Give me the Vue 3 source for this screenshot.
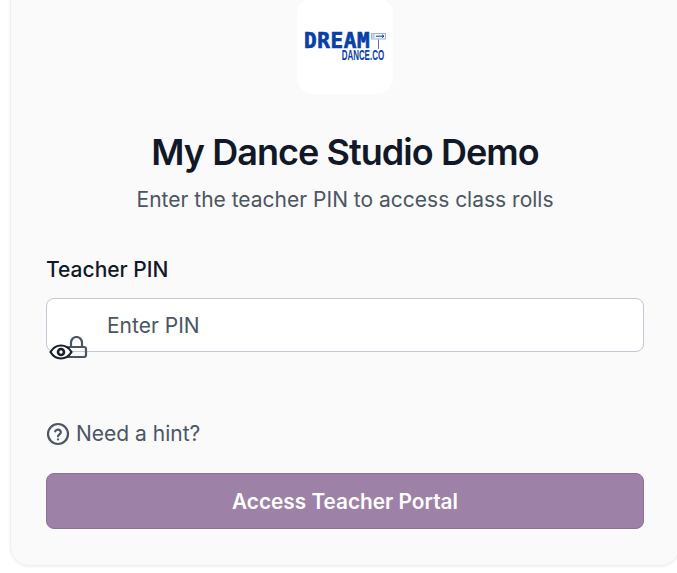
<template>
  <main class="page">
    <section class="card">
      <div class="logo">
        <div class="logoMark">
          <div class="logoTop">
            <span class="dream">DREAM</span>
            <svg class="sign" width="15" height="16" viewBox="0 0 15 16">
              <rect x="0.5" y="0.5" width="14" height="5.5" fill="#f2f5fb" stroke="#9db2de" stroke-width="1" />
              <path d="M1.5 2h2M1.5 4h2" stroke="#7f98cf" stroke-width="1" />
              <path d="M5 3.2h8M11 1.8l2 1.4-2 1.4" fill="none" stroke="#0b3fa8" stroke-width="1" />
              <path d="M7.5 6.5V16" stroke="#4f76c4" stroke-width="1" />
            </svg>
          </div>
          <span class="dance">DANCE.CO</span>
        </div>
      </div>

      <h1>My Dance Studio Demo</h1>
      <p class="subtitle">Enter the teacher PIN to access class rolls</p>

      <label class="fieldLabel" for="pin">Teacher PIN</label>
      <div class="inputWrap">
        <input id="pin" type="password" placeholder="Enter PIN" />
        <svg class="lockIcon" width="22" height="22" viewBox="0 0 22 22" fill="none" stroke="#4b5563" stroke-width="2.2">
          <path d="M5 11V6.5a5.5 5.5 0 0 1 11 0V11" />
          <rect x="1" y="11" width="19" height="10" rx="2" />
        </svg>
        <svg class="eyeIcon" width="24" height="16" viewBox="0 0 24 16" fill="#ffffff" stroke="#1a1f2b" stroke-width="2.2">
          <path d="M1.5 8C4 3.8 7.6 1.5 12 1.5S20 3.8 22.5 8C20 12.2 16.4 14.5 12 14.5S4 12.2 1.5 8Z" />
          <circle cx="12" cy="8" r="3" stroke-width="2.6" />
        </svg>
      </div>

      <div class="hint">
        <svg width="24" height="24" viewBox="0 0 24 24" fill="none" stroke="#4b5563" stroke-width="2.2" stroke-linecap="round">
          <circle cx="12" cy="12" r="10" />
          <path d="M9.2 9.4a2.9 2.9 0 0 1 5.6 1c0 1.9-2.8 2.4-2.8 3.9" />
          <path d="M12 17.4h.01" />
        </svg>
        <span>Need a hint?</span>
      </div>

      <button class="submit" type="button">Access Teacher Portal</button>
    </section>
  </main>
</template>

<script setup>
</script>

<style>
  html, body {
    background: #ffffff;
    overflow: hidden;
  }
</style>

<style scoped>
  .page {
    width: 677px;
    height: 573px;
    overflow: hidden;
    font-family: Inter, "Liberation Sans", sans-serif;
  }

  .card {
    box-sizing: border-box;
    width: 670px;
    height: 601px;
    margin-left: 10px;
    margin-top: -35px;
    padding: 32px 35px 36px;
    background: #fafafa;
    border: 1px solid #f0f0f2;
    border-radius: 20px;
    box-shadow: 0 1px 3px rgba(0, 0, 0, 0.06);
    display: flex;
    flex-direction: column;
  }

  .logo {
    align-self: center;
    width: 96px;
    height: 96px;
    border-radius: 16px;
    background: #ffffff;
    display: flex;
    justify-content: center;
    align-items: center;
  }

  .logoMark {
    width: 82px;
    display: flex;
    flex-direction: column;
    align-items: flex-end;
    color: #0b3fa8;
    line-height: 1;
  }

  .logoTop {
    display: flex;
    align-items: flex-start;
    justify-content: space-between;
    width: 100%;
    height: 16px;
  }

  .dream {
    font-family: "DejaVu Sans Mono", monospace;
    font-weight: 700;
    font-size: 21px;
    line-height: 16px;
    letter-spacing: 0.6px;
    -webkit-text-stroke: 0.7px #0b3fa8;
  }

  .dance {
    display: block;
    width: 78px;
    margin-left: -30px;
    margin-right: 3px;
    text-align: right;
    font-family: "Liberation Sans", sans-serif;
    font-weight: 700;
    font-size: 15px;
    line-height: 11px;
    white-space: nowrap;
    transform: scaleX(0.53);
    transform-origin: right center;
  }

  h1 {
    margin: 38px 0 0;
    text-align: center;
    font-size: 36px;
    line-height: 40px;
    font-weight: 600;
    letter-spacing: -0.95px;
    color: #111827;
  }

  .subtitle {
    margin: 14px 0 0;
    text-align: center;
    font-size: 21px;
    line-height: 28px;
    color: #4b5563;
  }

  .fieldLabel {
    margin-top: 42px;
    font-size: 21px;
    line-height: 28px;
    font-weight: 500;
    color: #111827;
  }

  .inputWrap {
    position: relative;
    margin-top: 14px;
  }

  input {
    box-sizing: border-box;
    width: 100%;
    height: 54px;
    padding: 0 16px 0 60px;
    background: #ffffff;
    border: 1px solid #c5c8d4;
    border-radius: 8px;
    font: 400 21px Inter, "Liberation Sans", sans-serif;
    color: #111827;
    outline: none;
  }

  input::placeholder {
    color: #4b5563;
    opacity: 1;
  }

  .lockIcon {
    position: absolute;
    left: 20px;
    top: 38px;
  }

  .eyeIcon {
    position: absolute;
    left: 3px;
    top: 46px;
  }

  .hint {
    margin-top: 68px;
    display: flex;
    align-items: center;
    gap: 6px;
    font-size: 21px;
    line-height: 28px;
    color: #4b5563;
  }

  .submit {
    margin-top: 25px;
    height: 56px;
    background: #9d81a6;
    border: 1px solid #8c7396;
    border-radius: 8px;
    font: 600 20.8px Inter, "Liberation Sans", sans-serif;
    color: #ffffff;
  }
</style>
